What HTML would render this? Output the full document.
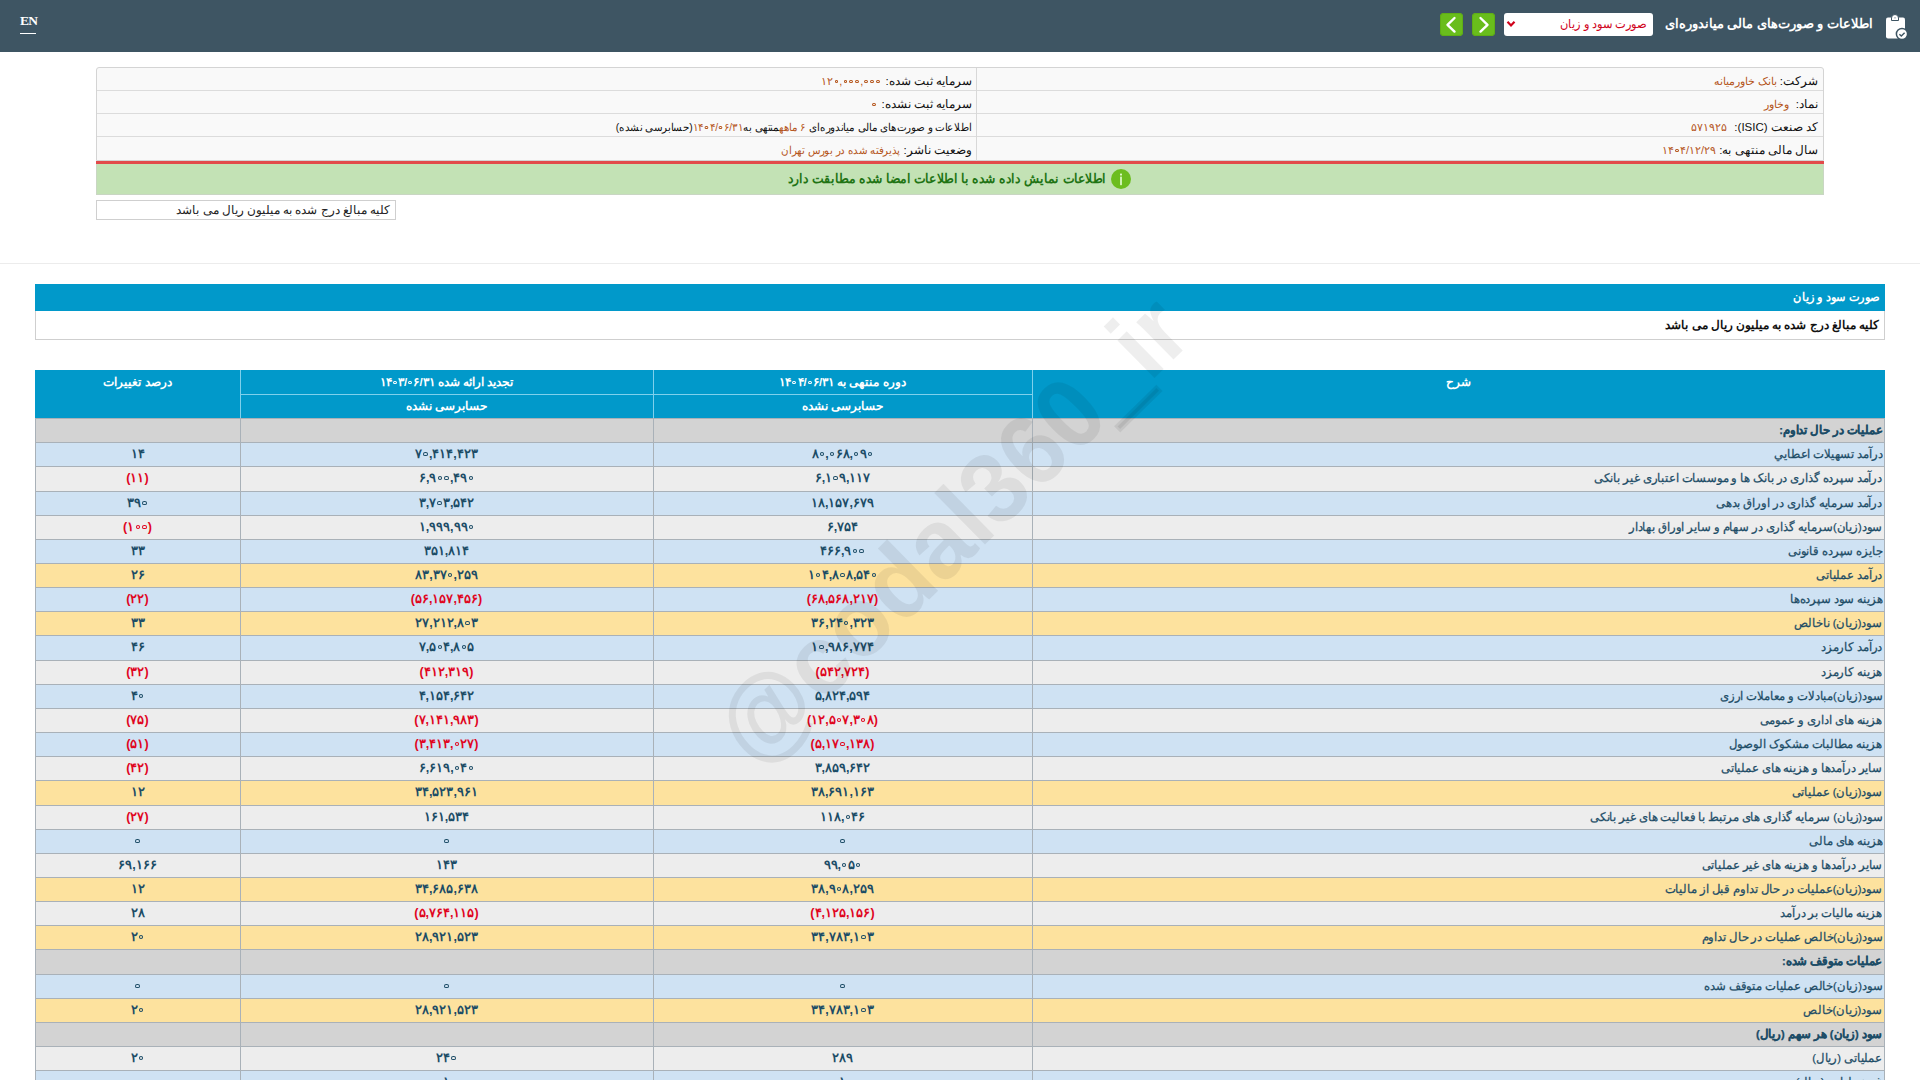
<!DOCTYPE html><html lang="fa"><head><meta charset="utf-8"><title>Codal</title><style>
*{margin:0;padding:0;box-sizing:border-box}
html,body{width:1920px;height:1080px;overflow:hidden;background:#fff}
body{font-family:"Liberation Sans",sans-serif;position:relative;color:#222}
.a{position:absolute}
.t{position:absolute;white-space:nowrap;direction:rtl;line-height:1}
#hdr{left:0;top:0;width:1920px;height:52px;background:#3e5563}
#en{left:20px;top:14px;font-family:"Liberation Serif",serif;font-size:13.5px;font-weight:bold;color:#fff;line-height:14px;width:16px;letter-spacing:-0.8px;border-bottom:1.5px solid #fff;padding-bottom:5px;white-space:nowrap}
.nb{width:23px;height:23px;top:13px;background:#69bd1c;border-radius:4px;box-shadow:inset 0 0 0 1px #5fae16}
#sel{left:1504px;top:13px;width:149px;height:23px;background:#fff;border-radius:3px}
.info{left:96px;top:67px;width:1728px;height:94px;background:#f9f9f9;border:1px solid #d4d4d4;border-radius:3px 3px 0 0}
.hl{position:absolute;height:1px;background:#dcdcdc}
.vl{position:absolute;width:1px}
.lab{font-size:11.5px;color:#111}
.val{font-size:11px;color:#b5561c}
#red{left:96px;top:161px;width:1728px;height:3px;background:#e24a4a}
#grn{left:96px;top:164px;width:1728px;height:31px;background:#c3e2b5;border:1px solid #c9d6c3;border-top:0}
#note{left:96px;top:200px;width:300px;height:20px;border:1px solid #cfcfcf;background:#fff}
#sep{left:0;top:263px;width:1920px;height:1px;background:#ececec}
#bar{left:35px;top:284px;width:1850px;height:27px;background:#0199ca}
#box2{left:35px;top:311px;width:1850px;height:29px;border:1px solid #cfcfcf;border-top:0;background:#fff}
#th{left:35px;top:370px;width:1850px;height:48px;background:#0199ca}
.wh{color:#fff;font-weight:bold;font-size:11.5px}
.row{position:absolute;left:35px;width:1850px;border-top:1px solid #a9b1b8}
.c{position:absolute;white-space:nowrap;line-height:1;font-size:12.5px;font-weight:bold;color:#1c4c66;text-align:center;letter-spacing:-0.25px}
.lbl{position:absolute;white-space:nowrap;line-height:1;font-size:11.5px;color:#1c4c66;direction:rtl;right:3px;-webkit-text-stroke:0.25px #1c4c66;transform:scaleX(0.97);transform-origin:100% 50%}
.neg{color:#e0061f}
.n{direction:ltr;unicode-bidi:isolate}
.z{display:inline-block;width:0.34em;height:0.3em;border:0.105em solid currentColor;border-radius:50%;margin:0 0.1em 0.15em;vertical-align:baseline}

</style></head><body>
<div id="hdr" class="a"></div>
<div id="en" class="a">EN</div>
<div class="a nb" style="left:1440px"><svg width="23" height="23" viewBox="0 0 23 23"><path d="M14.5 5 L7.5 11.8 L14.5 18.6" stroke="#fff" stroke-width="2.4" fill="none" stroke-linecap="round" stroke-linejoin="round"/></svg></div>
<div class="a nb" style="left:1472px"><svg width="23" height="23" viewBox="0 0 23 23"><path d="M8.5 5 L15.5 11.8 L8.5 18.6" stroke="#fff" stroke-width="2.4" fill="none" stroke-linecap="round" stroke-linejoin="round"/></svg></div>
<div id="sel" class="a"><svg class="a" style="left:0px;top:6px" width="14" height="10" viewBox="0 0 14 10"><path d="M3.5 2.8 L7 6.5 L10.5 2.8" stroke="#d0021b" stroke-width="2.2" fill="none"/></svg><div class="t" style="right:6px;top:6px;font-size:11.5px;color:#d0021b;transform:scaleX(0.95);transform-origin:100% 50%">صورت سود و زیان</div></div>
<div class="t" style="right:47px;top:17px;font-size:13px;color:#fff;font-weight:bold">اطلاعات و صورت‌های مالی میاندوره‌ای</div>
<svg class="a" style="left:1880px;top:12px" width="32" height="30" viewBox="0 0 32 30"><rect x="6" y="5.5" width="19" height="21" rx="2" fill="#fff"/><path d="M11.5 8.5 V6 a3.5 3.5 0 0 1 7 0 V8.5 Z" fill="#fff" stroke="#3e5563" stroke-width="1"/><path d="M14.2 6.2 L15 4.9 L15.8 6.2 Z" fill="#3e5563"/><circle cx="22" cy="22" r="5.6" fill="#fff" stroke="#3e5563" stroke-width="1.5"/><path d="M19.4 22.3 L21.3 24 L24.6 20.7" stroke="#3e5563" stroke-width="1.4" fill="none"/></svg>
<div class="a info"></div>
<div class="hl" style="left:97px;top:90px;width:1726px"></div>
<div class="hl" style="left:97px;top:113px;width:1726px"></div>
<div class="hl" style="left:97px;top:136px;width:1726px"></div>
<div class="vl" style="left:976px;top:68px;height:93px;background:#d8d8d8"></div>
<div class="t lab" style="right:102px;top:76px">شرکت:</div>
<div class="t val" style="right:143px;top:76px">بانک خاورمیانه</div>
<div class="t lab" style="right:102px;top:99px">نماد:</div>
<div class="t val" style="right:131px;top:99px">وخاور</div>
<div class="t lab" style="right:102px;top:122px">کد صنعت (ISIC):</div>
<div class="t val" style="right:193px;top:122px"><span class="n">۵۷۱۹۲۵</span></div>
<div class="t lab" style="right:102px;top:145px">سال مالی منتهی به:</div>
<div class="t val" style="right:204px;top:145px"><span class="n">۱۴<i class="z"></i>۴/۱۲/۲۹</span></div>
<div class="t lab" style="right:948px;top:76px">سرمایه ثبت شده:</div>
<div class="t val" style="right:1039px;top:76px"><span class="n">۱۲<i class="z"></i>,<i class="z"></i><i class="z"></i><i class="z"></i>,<i class="z"></i><i class="z"></i><i class="z"></i></span></div>
<div class="t lab" style="right:948px;top:99px">سرمایه ثبت نشده:</div>
<div class="t val" style="right:1043px;top:99px"><span class="n"><i class="z"></i></span></div>
<div class="t lab" style="right:948px;top:122px;font-size:11px;transform:scaleX(0.935);transform-origin:100% 50%">اطلاعات و صورت‌های مالی میاندوره‌ای <span class="val">۶ ماهه</span>منتهی به<span class="val"><span class="n">۱۴<i class="z"></i>۴/<i class="z"></i>۶/۳۱</span></span>(حسابرسی نشده)</div>
<div class="t lab" style="right:948px;top:145px">وضعیت ناشر:</div>
<div class="t val" style="right:1020px;top:145px;transform:scaleX(0.935);transform-origin:100% 50%">پذیرفته شده در بورس تهران</div>
<div id="red" class="a"></div>
<div id="grn" class="a"></div>
<div class="t" style="right:814px;top:173px;font-size:12.5px;font-weight:bold;color:#1f7414;transform:scaleX(0.95);transform-origin:100% 50%">اطلاعات نمایش داده شده با اطلاعات امضا شده مطابقت دارد</div>
<svg class="a" style="left:1111px;top:169px" width="20" height="20" viewBox="0 0 20 20"><circle cx="10" cy="10" r="10" fill="#6cbd1f"/><rect x="9.1" y="4.6" width="1.8" height="1.8" rx="0.5" fill="#e8ffd8"/><rect x="9.2" y="7.6" width="1.6" height="8.6" rx="0.4" fill="#e8ffd8"/></svg>
<div id="note" class="a"></div>
<div class="t" style="right:1530px;top:205px;font-size:11.5px;color:#222">کلیه مبالغ درج شده به میلیون ریال می باشد</div>
<div id="sep" class="a"></div>
<div id="bar" class="a"></div>
<div class="t" style="right:40px;top:292px;font-size:11.5px;font-weight:bold;color:#fff;transform:scaleX(0.94);transform-origin:100% 50%">صورت سود و زیان</div>
<div id="box2" class="a"></div>
<div class="t" style="right:41px;top:320px;font-size:11.5px;font-weight:bold;color:#111">کلیه مبالغ درج شده به میلیون ریال می باشد</div>
<div id="th" class="a"></div>
<div class="vl" style="left:240px;top:370px;height:48px;background:#7fd0ec"></div>
<div class="vl" style="left:653px;top:370px;height:48px;background:#7fd0ec"></div>
<div class="vl" style="left:1032px;top:370px;height:48px;background:#7fd0ec"></div>
<div class="hl" style="left:240px;top:394px;width:792px;background:#7fd0ec"></div>
<div class="t wh" style="left:1032px;width:853px;text-align:center;top:377px;">شرح</div>
<div class="t wh" style="left:653px;width:379px;text-align:center;top:377px;">دوره منتهی به <span class="n">۱۴<i class="z"></i>۴/<i class="z"></i>۶/۳۱</span></div>
<div class="t wh" style="left:240px;width:413px;text-align:center;top:377px;">تجدید ارائه شده <span class="n">۱۴<i class="z"></i>۳/<i class="z"></i>۶/۳۱</span></div>
<div class="t wh" style="left:35px;width:205px;text-align:center;top:377px;">درصد تغییرات</div>
<div class="t wh" style="left:653px;width:379px;text-align:center;top:401px;">حسابرسی نشده</div>
<div class="t wh" style="left:240px;width:413px;text-align:center;top:401px;">حسابرسی نشده</div>
<div class="row" style="top:418px;height:24px;background:#d3d3d3">
<div class="lbl" style="top:6px;font-weight:bold;">عملیات در حال تداوم:</div>
</div>
<div class="row" style="top:442px;height:24px;background:#cfe2f3">
<div class="lbl" style="top:6px;">درآمد تسهیلات اعطایي</div>
<div class="c" style="left:618px;width:379px;top:5px"><span class="n">۸<i class="z"></i>,<i class="z"></i>۶۸,<i class="z"></i>۹<i class="z"></i></span></div>
<div class="c" style="left:205px;width:413px;top:5px"><span class="n">۷<i class="z"></i>,۴۱۴,۴۲۳</span></div>
<div class="c" style="left:0px;width:205px;top:5px"><span class="n">۱۴</span></div>
</div>
<div class="row" style="top:466px;height:25px;background:#ededed">
<div class="lbl" style="top:6px;">درآمد سپرده گذاری در بانک ها و موسسات اعتباری غیر بانکی</div>
<div class="c" style="left:618px;width:379px;top:5px"><span class="n">۶,۱<i class="z"></i>۹,۱۱۷</span></div>
<div class="c" style="left:205px;width:413px;top:5px"><span class="n">۶,۹<i class="z"></i><i class="z"></i>,۴۹<i class="z"></i></span></div>
<div class="c neg" style="left:0px;width:205px;top:5px"><span class="n">(۱۱)</span></div>
</div>
<div class="row" style="top:491px;height:24px;background:#cfe2f3">
<div class="lbl" style="top:6px;">درآمد سرمایه گذاری در اوراق بدهی</div>
<div class="c" style="left:618px;width:379px;top:5px"><span class="n">۱۸,۱۵۷,۶۷۹</span></div>
<div class="c" style="left:205px;width:413px;top:5px"><span class="n">۳,۷<i class="z"></i>۳,۵۴۲</span></div>
<div class="c" style="left:0px;width:205px;top:5px"><span class="n">۳۹<i class="z"></i></span></div>
</div>
<div class="row" style="top:515px;height:24px;background:#ededed">
<div class="lbl" style="top:6px;">سود(زیان)سرمایه گذاری در سهام و سایر اوراق بهادار</div>
<div class="c" style="left:618px;width:379px;top:5px"><span class="n">۶,۷۵۴</span></div>
<div class="c" style="left:205px;width:413px;top:5px"><span class="n">۱,۹۹۹,۹۹<i class="z"></i></span></div>
<div class="c neg" style="left:0px;width:205px;top:5px"><span class="n">(۱<i class="z"></i><i class="z"></i>)</span></div>
</div>
<div class="row" style="top:539px;height:24px;background:#cfe2f3">
<div class="lbl" style="top:6px;">جایزه سپرده قانونی</div>
<div class="c" style="left:618px;width:379px;top:5px"><span class="n">۴۶۶,۹<i class="z"></i><i class="z"></i></span></div>
<div class="c" style="left:205px;width:413px;top:5px"><span class="n">۳۵۱,۸۱۴</span></div>
<div class="c" style="left:0px;width:205px;top:5px"><span class="n">۳۳</span></div>
</div>
<div class="row" style="top:563px;height:24px;background:#fde29e">
<div class="lbl" style="top:6px;">درآمد عملیاتی</div>
<div class="c" style="left:618px;width:379px;top:5px"><span class="n">۱<i class="z"></i>۴,۸<i class="z"></i>۸,۵۴<i class="z"></i></span></div>
<div class="c" style="left:205px;width:413px;top:5px"><span class="n">۸۳,۳۷<i class="z"></i>,۲۵۹</span></div>
<div class="c" style="left:0px;width:205px;top:5px"><span class="n">۲۶</span></div>
</div>
<div class="row" style="top:587px;height:24px;background:#cfe2f3">
<div class="lbl" style="top:6px;">هزینه سود سپرده‌ها</div>
<div class="c neg" style="left:618px;width:379px;top:5px"><span class="n">(۶۸,۵۶۸,۲۱۷)</span></div>
<div class="c neg" style="left:205px;width:413px;top:5px"><span class="n">(۵۶,۱۵۷,۴۵۶)</span></div>
<div class="c neg" style="left:0px;width:205px;top:5px"><span class="n">(۲۲)</span></div>
</div>
<div class="row" style="top:611px;height:24px;background:#fde29e">
<div class="lbl" style="top:6px;">سود(زیان) ناخالص</div>
<div class="c" style="left:618px;width:379px;top:5px"><span class="n">۳۶,۲۴<i class="z"></i>,۳۲۳</span></div>
<div class="c" style="left:205px;width:413px;top:5px"><span class="n">۲۷,۲۱۲,۸<i class="z"></i>۳</span></div>
<div class="c" style="left:0px;width:205px;top:5px"><span class="n">۳۳</span></div>
</div>
<div class="row" style="top:635px;height:25px;background:#cfe2f3">
<div class="lbl" style="top:6px;">درآمد کارمزد</div>
<div class="c" style="left:618px;width:379px;top:5px"><span class="n">۱<i class="z"></i>,۹۸۶,۷۷۴</span></div>
<div class="c" style="left:205px;width:413px;top:5px"><span class="n">۷,۵<i class="z"></i>۴,۸<i class="z"></i>۵</span></div>
<div class="c" style="left:0px;width:205px;top:5px"><span class="n">۴۶</span></div>
</div>
<div class="row" style="top:660px;height:24px;background:#ededed">
<div class="lbl" style="top:6px;">هزینه کارمزد</div>
<div class="c neg" style="left:618px;width:379px;top:5px"><span class="n">(۵۴۲,۷۲۴)</span></div>
<div class="c neg" style="left:205px;width:413px;top:5px"><span class="n">(۴۱۲,۳۱۹)</span></div>
<div class="c neg" style="left:0px;width:205px;top:5px"><span class="n">(۳۲)</span></div>
</div>
<div class="row" style="top:684px;height:24px;background:#cfe2f3">
<div class="lbl" style="top:6px;">سود(زیان)مبادلات و معاملات ارزی</div>
<div class="c" style="left:618px;width:379px;top:5px"><span class="n">۵,۸۲۴,۵۹۴</span></div>
<div class="c" style="left:205px;width:413px;top:5px"><span class="n">۴,۱۵۴,۶۴۲</span></div>
<div class="c" style="left:0px;width:205px;top:5px"><span class="n">۴<i class="z"></i></span></div>
</div>
<div class="row" style="top:708px;height:24px;background:#ededed">
<div class="lbl" style="top:6px;">هزینه های اداری و عمومی</div>
<div class="c neg" style="left:618px;width:379px;top:5px"><span class="n">(۱۲,۵<i class="z"></i>۷,۳<i class="z"></i>۸)</span></div>
<div class="c neg" style="left:205px;width:413px;top:5px"><span class="n">(۷,۱۴۱,۹۸۳)</span></div>
<div class="c neg" style="left:0px;width:205px;top:5px"><span class="n">(۷۵)</span></div>
</div>
<div class="row" style="top:732px;height:24px;background:#cfe2f3">
<div class="lbl" style="top:6px;">هزینه مطالبات مشکوک الوصول</div>
<div class="c neg" style="left:618px;width:379px;top:5px"><span class="n">(۵,۱۷<i class="z"></i>,۱۳۸)</span></div>
<div class="c neg" style="left:205px;width:413px;top:5px"><span class="n">(۳,۴۱۳,<i class="z"></i>۲۷)</span></div>
<div class="c neg" style="left:0px;width:205px;top:5px"><span class="n">(۵۱)</span></div>
</div>
<div class="row" style="top:756px;height:24px;background:#ededed">
<div class="lbl" style="top:6px;">سایر درآمدها و هزینه های عملیاتی</div>
<div class="c" style="left:618px;width:379px;top:5px"><span class="n">۳,۸۵۹,۶۴۲</span></div>
<div class="c" style="left:205px;width:413px;top:5px"><span class="n">۶,۶۱۹,<i class="z"></i>۴<i class="z"></i></span></div>
<div class="c neg" style="left:0px;width:205px;top:5px"><span class="n">(۴۲)</span></div>
</div>
<div class="row" style="top:780px;height:25px;background:#fde29e">
<div class="lbl" style="top:6px;">سود(زیان) عملیاتی</div>
<div class="c" style="left:618px;width:379px;top:5px"><span class="n">۳۸,۶۹۱,۱۶۳</span></div>
<div class="c" style="left:205px;width:413px;top:5px"><span class="n">۳۴,۵۲۳,۹۶۱</span></div>
<div class="c" style="left:0px;width:205px;top:5px"><span class="n">۱۲</span></div>
</div>
<div class="row" style="top:805px;height:24px;background:#ededed">
<div class="lbl" style="top:6px;">سود(زیان) سرمایه گذاری های مرتبط با فعالیت های غیر بانکی</div>
<div class="c" style="left:618px;width:379px;top:5px"><span class="n">۱۱۸,<i class="z"></i>۴۶</span></div>
<div class="c" style="left:205px;width:413px;top:5px"><span class="n">۱۶۱,۵۳۴</span></div>
<div class="c neg" style="left:0px;width:205px;top:5px"><span class="n">(۲۷)</span></div>
</div>
<div class="row" style="top:829px;height:24px;background:#cfe2f3">
<div class="lbl" style="top:6px;">هزینه های مالی</div>
<div class="c" style="left:618px;width:379px;top:5px"><span class="n"><i class="z"></i></span></div>
<div class="c" style="left:205px;width:413px;top:5px"><span class="n"><i class="z"></i></span></div>
<div class="c" style="left:0px;width:205px;top:5px"><span class="n"><i class="z"></i></span></div>
</div>
<div class="row" style="top:853px;height:24px;background:#ededed">
<div class="lbl" style="top:6px;">سایر درآمدها و هزینه های غیر عملیاتی</div>
<div class="c" style="left:618px;width:379px;top:5px"><span class="n">۹۹,<i class="z"></i>۵<i class="z"></i></span></div>
<div class="c" style="left:205px;width:413px;top:5px"><span class="n">۱۴۳</span></div>
<div class="c" style="left:0px;width:205px;top:5px"><span class="n">۶۹,۱۶۶</span></div>
</div>
<div class="row" style="top:877px;height:24px;background:#fde29e">
<div class="lbl" style="top:6px;">سود(زیان)عملیات در حال تداوم قبل از مالیات</div>
<div class="c" style="left:618px;width:379px;top:5px"><span class="n">۳۸,۹<i class="z"></i>۸,۲۵۹</span></div>
<div class="c" style="left:205px;width:413px;top:5px"><span class="n">۳۴,۶۸۵,۶۳۸</span></div>
<div class="c" style="left:0px;width:205px;top:5px"><span class="n">۱۲</span></div>
</div>
<div class="row" style="top:901px;height:24px;background:#ededed">
<div class="lbl" style="top:6px;">هزینه مالیات بر درآمد</div>
<div class="c neg" style="left:618px;width:379px;top:5px"><span class="n">(۴,۱۲۵,۱۵۶)</span></div>
<div class="c neg" style="left:205px;width:413px;top:5px"><span class="n">(۵,۷۶۴,۱۱۵)</span></div>
<div class="c" style="left:0px;width:205px;top:5px"><span class="n">۲۸</span></div>
</div>
<div class="row" style="top:925px;height:24px;background:#fde29e">
<div class="lbl" style="top:6px;">سود(زیان)خالص عملیات در حال تداوم</div>
<div class="c" style="left:618px;width:379px;top:5px"><span class="n">۳۴,۷۸۳,۱<i class="z"></i>۳</span></div>
<div class="c" style="left:205px;width:413px;top:5px"><span class="n">۲۸,۹۲۱,۵۲۳</span></div>
<div class="c" style="left:0px;width:205px;top:5px"><span class="n">۲<i class="z"></i></span></div>
</div>
<div class="row" style="top:949px;height:25px;background:#d3d3d3">
<div class="lbl" style="top:6px;font-weight:bold;">عملیات متوقف شده:</div>
</div>
<div class="row" style="top:974px;height:24px;background:#cfe2f3">
<div class="lbl" style="top:6px;">سود(زیان)خالص عملیات متوقف شده</div>
<div class="c" style="left:618px;width:379px;top:5px"><span class="n"><i class="z"></i></span></div>
<div class="c" style="left:205px;width:413px;top:5px"><span class="n"><i class="z"></i></span></div>
<div class="c" style="left:0px;width:205px;top:5px"><span class="n"><i class="z"></i></span></div>
</div>
<div class="row" style="top:998px;height:24px;background:#fde29e">
<div class="lbl" style="top:6px;">سود(زیان)خالص</div>
<div class="c" style="left:618px;width:379px;top:5px"><span class="n">۳۴,۷۸۳,۱<i class="z"></i>۳</span></div>
<div class="c" style="left:205px;width:413px;top:5px"><span class="n">۲۸,۹۲۱,۵۲۳</span></div>
<div class="c" style="left:0px;width:205px;top:5px"><span class="n">۲<i class="z"></i></span></div>
</div>
<div class="row" style="top:1022px;height:24px;background:#d3d3d3">
<div class="lbl" style="top:6px;font-weight:bold;">سود (زیان) هر سهم (ریال)</div>
</div>
<div class="row" style="top:1046px;height:24px;background:#ededed">
<div class="lbl" style="top:6px;">عملیاتی (ریال)</div>
<div class="c" style="left:618px;width:379px;top:5px"><span class="n">۲۸۹</span></div>
<div class="c" style="left:205px;width:413px;top:5px"><span class="n">۲۴<i class="z"></i></span></div>
<div class="c" style="left:0px;width:205px;top:5px"><span class="n">۲<i class="z"></i></span></div>
</div>
<div class="row" style="top:1070px;height:24px;background:#cfe2f3">
<div class="lbl" style="top:6px;">غیرعملیاتی (ریال)</div>
<div class="c" style="left:618px;width:379px;top:5px"><span class="n">۱</span></div>
<div class="c" style="left:205px;width:413px;top:5px"><span class="n">۱</span></div>
<div class="c" style="left:0px;width:205px;top:5px"><span class="n"><i class="z"></i></span></div>
</div>
<div class="vl" style="left:35px;top:418px;height:662px;background:#a9b1b8"></div>
<div class="vl" style="left:240px;top:418px;height:662px;background:#a9b1b8"></div>
<div class="vl" style="left:653px;top:418px;height:662px;background:#a9b1b8"></div>
<div class="vl" style="left:1032px;top:418px;height:662px;background:#a9b1b8"></div>
<div class="vl" style="left:1884px;top:418px;height:662px;background:#a9b1b8"></div>
<div class="a" style="left:451px;top:474px;width:1000px;height:110px;transform:rotate(-44.5deg) scaleX(0.95);font-family:'Liberation Sans',sans-serif;font-weight:bold;font-size:100px;line-height:110px;color:rgba(0,0,0,0.065);text-align:center;white-space:nowrap">@codal360<span style="-webkit-text-stroke:5px rgba(0,0,0,0.065)">_</span>ir</div>
</body></html>
